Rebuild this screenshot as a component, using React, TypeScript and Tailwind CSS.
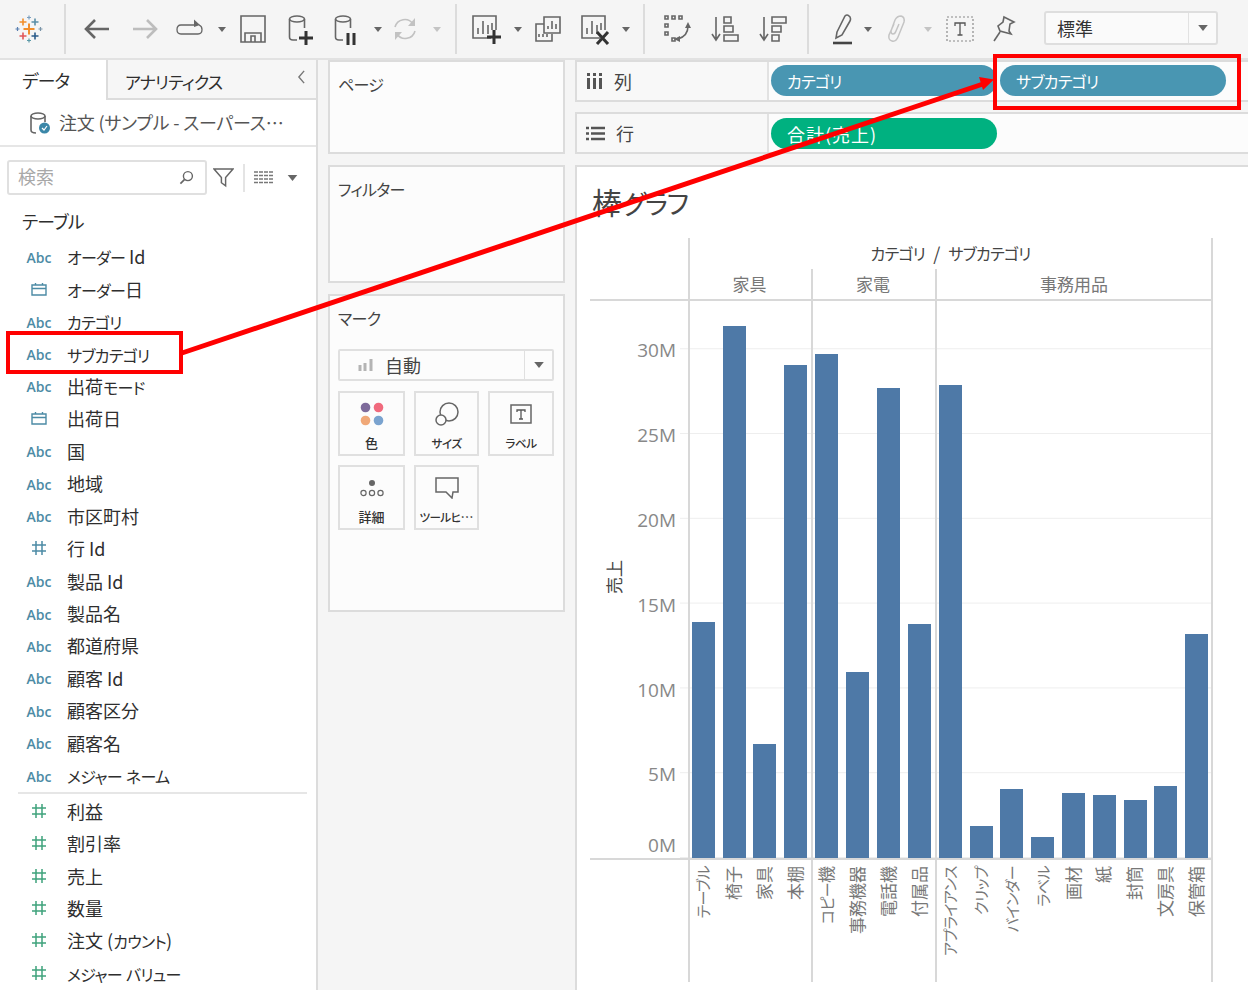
import React from "react"

const ic = "fill-none stroke-[#666666] stroke-[1.6]"

// the reference font has narrow kana, so katakana runs get set a little tighter
function Jp({ text }: { text: string }) {
  const parts = text.split(/([\u30A0-\u30FF]+)/)
  return (
    <>
      {parts.map((p, i) =>
        i % 2 === 1 ? (
          <span key={i} className="text-[0.89em] tracking-[-0.045em]">
            {p}
          </span>
        ) : (
          p
        )
      )}
    </>
  )
}

function Caret({ className = "", light = false }: { className?: string; light?: boolean }) {
  return (
    <svg viewBox="0 0 8 5" className={`w-[8px] h-[5px] shrink-0 ${className}`}>
      <path d="M0 0H8L4 5Z" fill={light ? "#c4c4c4" : "#666666"} />
    </svg>
  )
}

function Sep({ className = "" }: { className?: string }) {
  return <div className={`w-[2px] h-[50px] bg-[#dcdcdc] shrink-0 ${className}`} />
}

function Plus({ x, y, s, c, w }: { x: number; y: number; s: number; c: string; w: number }) {
  return <path d={`M${x - s} ${y}H${x + s}M${x} ${y - s}V${y + s}`} stroke={c} strokeWidth={w} />
}

function Logo() {
  return (
    <svg viewBox="0 0 28 28" className="w-[28px] h-[28px] shrink-0">
      <Plus x={14} y={14} s={5.5} c="#f28e2b" w={2} />
      <Plus x={8} y={7} s={3.5} c="#f28e2b" w={1.6} />
      <Plus x={20} y={7} s={3.5} c="#5b8fa8" w={1.6} />
      <Plus x={8} y={21} s={3.5} c="#e15759" w={1.6} />
      <Plus x={20} y={21} s={3.5} c="#2b5c8a" w={1.6} />
      <Plus x={14} y={2.5} s={2} c="#7b9fc0" w={1.2} />
      <Plus x={14} y={25.5} s={2} c="#5b9aa8" w={1.2} />
      <Plus x={2.5} y={14} s={2} c="#5a7fb0" w={1.2} />
      <Plus x={25.5} y={14} s={2} c="#7a94a8" w={1.2} />
    </svg>
  )
}

function Cyl({ mark }: { mark?: React.ReactNode }) {
  return (
    <svg viewBox="0 0 26 34" className="w-[26px] h-[34px] shrink-0">
      <ellipse cx="10" cy="7" rx="7.5" ry="3" className={ic} />
      <path d="M2.5 7V25Q2.5 28 6 28H10M17.5 7V16" className={ic} />
      {mark}
    </svg>
  )
}

function Chart({ w = 30, children }: { w?: number; children?: React.ReactNode }) {
  return (
    <svg viewBox="0 0 30 32" width={w} height={32} className="shrink-0">
      <path d="M20 25H2V3H25V17" className={ic} />
      <path d="M7 21V15M12 21V8M17 21V12M21 17V10" className={ic} strokeWidth={2} />
      {children}
    </svg>
  )
}

function Toolbar() {
  return (
    <div className="h-[60px] flex items-center pl-[15px] border-b-2 border-[#e2e2e2] shrink-0">
      <Logo />
      <Sep className="ml-[21px]" />
      <svg viewBox="0 0 28 24" className="w-[28px] h-[24px] ml-[17px] shrink-0">
        <path d="M26 12H3M12 3L3 12L12 21" fill="none" stroke="#666666" strokeWidth="2.6" />
      </svg>
      <svg viewBox="0 0 28 24" className="w-[28px] h-[24px] ml-[20px] shrink-0">
        <path d="M2 12H25M16 3L25 12L16 21" fill="none" stroke="#bdbdbd" strokeWidth="2.6" />
      </svg>
      <svg viewBox="0 0 32 22" className="w-[32px] h-[22px] ml-[15px] shrink-0">
        <path d="M20 7H7Q3 7 3 11.5Q3 16 7 16H24Q28 16 28 11.5Q28 8 25 7" fill="none" stroke="#666666" strokeWidth="1.3" />
        <path d="M20 1.5L26 7L20 9Z" fill="#666666" />
      </svg>
      <Caret className="ml-[12px]" />
      <svg viewBox="0 0 26 28" className="w-[26px] h-[28px] ml-[14px] shrink-0">
        <path d="M1 1H25V27H1Z" className={ic} />
        <path d="M5 27V18H21V27M11 27V21H15V27" className={ic} />
      </svg>
      <div className="ml-[21px] flex">
        <Cyl mark={<path d="M19 19V33M12 26H26" stroke="#333333" strokeWidth="3" />} />
      </div>
      <div className="ml-[20px] flex">
        <Cyl mark={<path d="M15 21V33M21 21V33" stroke="#333333" strokeWidth="3" />} />
      </div>
      <Caret className="ml-[15px]" />
      <svg viewBox="0 0 26 26" className="w-[26px] h-[26px] ml-[10px] shrink-0">
        <path d="M3 11A10 10 0 0 1 21 8M23 15A10 10 0 0 1 5 18" fill="none" stroke="#c2c2c2" strokeWidth="1.6" />
        <path d="M23 2V10H16ZM3 24V16H10Z" fill="#c2c2c2" />
      </svg>
      <Caret light className="ml-[15px]" />
      <Sep className="ml-[14px]" />
      <div className="ml-[14px] flex">
        <Chart>
          <path d="M23 17V31M16 24H30" stroke="#333333" strokeWidth="3" />
        </Chart>
      </div>
      <Caret className="ml-[13px]" />
      <svg viewBox="0 0 28 28" className="w-[28px] h-[28px] ml-[12px] shrink-0">
        <path d="M10 9H2V26H18V19" className={ic} />
        <path d="M10 2H26V18H10Z" className={ic} />
        <path d="M14 14V11M18 14V6M22 14V9M5 22V19M9 22V19M13 22V19" className={ic} />
      </svg>
      <div className="ml-[18px] flex">
        <Chart>
          <path d="M17 19L28 31M28 19L17 31" stroke="#333333" strokeWidth="3" />
        </Chart>
      </div>
      <Caret className="ml-[12px]" />
      <Sep className="ml-[13px]" />
      <svg viewBox="0 0 28 30" className="w-[28px] h-[30px] ml-[18px] shrink-0">
        <path d="M2 2H5V5H2ZM9 2H12V5H9ZM16 2H19V5H16ZM2 10H5V13H2ZM2 18H5V21H2ZM9 24H12V27H9Z" className={ic} strokeWidth={1.2} />
        <path d="M25 12Q25 22 15 25" className={ic} />
        <path d="M25 8L28 14H22ZM11 25L17 22V28Z" fill="#666666" />
      </svg>
      <svg viewBox="0 0 28 28" className="w-[28px] h-[28px] ml-[20px] shrink-0">
        <path d="M5 2V24M1 19L5 25L9 19" className={ic} />
        <path d="M13 2H20V8H13ZM13 11H22V17H13ZM13 20H27V26H13Z" className={ic} />
      </svg>
      <svg viewBox="0 0 28 28" className="w-[28px] h-[28px] ml-[20px] shrink-0">
        <path d="M5 2V24M1 19L5 25L9 19" className={ic} />
        <path d="M13 2H27V8H13ZM13 11H22V17H13ZM13 20H20V26H13Z" className={ic} />
      </svg>
      <Sep className="ml-[20px]" />
      <svg viewBox="0 0 24 32" className="w-[24px] h-[32px] ml-[20px] shrink-0">
        <path d="M8 19L16 3Q18 1 20 3L21 4Q22 6 21 8L13 22L7 25Z" className={ic} />
        <path d="M4 30H23" stroke="#444444" strokeWidth="2.6" />
      </svg>
      <Caret className="ml-[11px]" />
      <svg viewBox="0 0 22 28" className="w-[22px] h-[28px] ml-[13px] shrink-0">
        <path d="M9 9L4 20Q3 25 7 26Q11 27 13 22L19 7Q20 2 16 1Q12 1 10 5L6 16Q6 19 8 19Q10 19 11 16L14 9" fill="none" stroke="#c4c4c4" strokeWidth="1.5" />
      </svg>
      <Caret light className="ml-[17px]" />
      <svg viewBox="0 0 28 26" className="w-[28px] h-[26px] ml-[14px] shrink-0">
        <path d="M1 1H27V25H1Z" fill="none" stroke="#8a8a8a" strokeWidth="1.2" strokeDasharray="2 2" />
        <path d="M9 10V7H19V10M14 7V19M11.5 19H16.5" fill="none" stroke="#555555" strokeWidth="1.3" />
      </svg>
      <svg viewBox="0 0 24 28" className="w-[24px] h-[28px] ml-[18px] shrink-0">
        <path d="M12 2L22 7L18 9L17 16L19 19L8 16L6 11L11 7Z" className={ic} />
        <path d="M8 17L2 26" className={ic} />
      </svg>
      <div className="ml-[28px] mb-[2px] w-[174px] h-[34px] bg-[#fafafa] border-2 border-[#dedede] rounded-[3px] flex items-center shrink-0">
        <span className="flex-1 pl-[11px] text-[18px] text-[#333333]">標準</span>
        <div className="w-[28px] h-full border-l border-[#e2e2e2] flex items-center justify-center">
          <Caret className="w-[10px] h-[6px]" />
        </div>
      </div>
    </div>
  )
}

function FieldIcon({ type }: { type: string }) {
  if (type === "abc") {
    return <span className="font-['Open_Sans',sans-serif] text-[14px] font-semibold text-[#4c8ba5] w-[26px] text-center mt-[3px] [font-feature-settings:normal]">Abc</span>
  }
  if (type === "date") {
    return (
      <svg viewBox="0 0 16 14" className="w-[16px] h-[14px] mx-[5px]">
        <path d="M1 3H15V13H1ZM1 6.5H15M4.5 1V3M11.5 1V3" fill="none" stroke="#4c8ba5" strokeWidth="1.4" />
      </svg>
    )
  }
  const c = type === "dim#" ? "#4c8ba5" : "#3fa37c"
  return (
    <svg viewBox="0 0 16 16" className="w-[16px] h-[16px] mx-[5px]">
      <path d="M5 1V15M11 1V15M1 5H15M1 11H15" fill="none" stroke={c} strokeWidth="1.5" />
    </svg>
  )
}

function FieldRow({ name, type }: { name: string; type: string }) {
  return (
    <div className="h-[32.44px] flex items-center pl-[26px] gap-[15px] text-[18px] text-[#2e2e2e] leading-none whitespace-nowrap">
      <FieldIcon type={type} />
      <span>
        <Jp text={name} />
      </span>
    </div>
  )
}

function Sidebar() {
  return (
    <div className="w-[318px] shrink-0 bg-white border-r-2 border-[#dcdcdc] flex flex-col">
      <div className="h-[40px] flex shrink-0">
        <div className="w-[106px] pl-[22px] pt-[6px] text-[20px] leading-[28px] text-[#2e2e2e] tracking-[-0.5px]">
          <Jp text="データ" />
        </div>
        <div className="flex-1 bg-[#f6f6f6] border-l-2 border-b-2 border-[#dcdcdc] flex items-center pl-[17px] text-[19px] text-[#2e2e2e] leading-none">
          <span className="flex-1 pt-[3px]">
            <Jp text="アナリティクス" />
          </span>
          <svg viewBox="0 0 10 16" className="w-[9px] h-[14px] mr-[10px] mb-[4px]">
            <path d="M8 1L2 8L8 15" fill="none" stroke="#777777" strokeWidth="1.6" />
          </svg>
        </div>
      </div>
      <div className="h-[47px] border-b-2 border-[#e6e6e6] flex items-center pl-[29px] gap-[8px] text-[18px] text-[#555555] shrink-0 whitespace-nowrap">
        <svg viewBox="0 0 22 24" className="w-[22px] h-[24px] shrink-0">
          <ellipse cx="9" cy="5" rx="7" ry="3" className={ic} strokeWidth={1.3} />
          <path d="M2 5V19Q2 22 7 22M16 5V11" className={ic} strokeWidth={1.3} />
          <circle cx="15.5" cy="17" r="5.5" fill="#3b87a8" />
          <path d="M13 17L15 19L18 15" fill="none" stroke="#ffffff" strokeWidth="1.2" />
        </svg>
        <span className="tracking-[-0.2px]">注文 (サンプル - スーパース…</span>
      </div>
      <div className="flex items-center pl-[7px] mt-[13px] shrink-0">
        <div className="w-[200px] h-[35px] border-2 border-[#e0e0e0] rounded-[3px] flex items-center pl-[9px] pr-[11px] text-[18px] text-[#a8a8a8]">
          <span className="flex-1 pb-[3px]">検索</span>
          <svg viewBox="0 0 16 16" className="w-[15px] h-[15px]">
            <circle cx="9.5" cy="6.5" r="4.8" fill="none" stroke="#666666" strokeWidth="1.5" />
            <path d="M6 10L1.5 14.5" stroke="#666666" strokeWidth="1.8" />
          </svg>
        </div>
        <svg viewBox="0 0 20 20" className="w-[21px] h-[21px] ml-[6px]">
          <path d="M1 2H19L12 10V18L8 15V10Z" fill="none" stroke="#666666" strokeWidth="1.4" />
        </svg>
        <div className="w-[2px] h-[28px] bg-[#e4e4e4] ml-[9px]" />
        <svg viewBox="0 0 20 16" className="w-[20px] h-[16px] ml-[9px]">
          <path d="M0 2H20M0 5.5H20M0 9H20M0 12.5H20" stroke="#777777" strokeWidth="1.6" strokeDasharray="4 1" />
        </svg>
        <Caret className="w-[11px] h-[6px] ml-[13px]" />
      </div>
      <div className="pl-[22px] mt-[11px] h-[30px] text-[20px] leading-[30px] text-[#2e2e2e] shrink-0">
        <Jp text="テーブル" />
      </div>
      <div className="mt-[4px] shrink-0">
        {dimensions.map((f) => (
          <FieldRow key={f.name} name={f.name} type={f.type} />
        ))}
      </div>
      <div className="h-[2px] bg-[#e6e6e6] ml-[18px] mr-[9px] mt-[1px] shrink-0" />
      <div className="shrink-0">
        {measures.map((name) => (
          <FieldRow key={name} name={name} type="measure" />
        ))}
      </div>
    </div>
  )
}

function MarkButton({ label, className = "", children }: { label: string; className?: string; children: React.ReactNode }) {
  return (
    <div className={`h-[65px] border-2 border-[#e0e0e0] flex flex-col items-center pt-[8px] ${className}`}>
      <div className="h-[26px] flex items-center justify-center">{children}</div>
      <span className="text-[13px] leading-[18px] mt-[7px] font-medium text-[#333333] whitespace-nowrap">
        <Jp text={label} />
      </span>
    </div>
  )
}

function Panel({ title, className = "", children }: { title: string; className?: string; children?: React.ReactNode }) {
  return (
    <div className={`bg-[#fcfcfc] border-2 border-[#dcdcdc] px-[8px] pt-[8px] shrink-0 ${className}`}>
      <div className="text-[18px] leading-[26px] text-[#444444]">
        <Jp text={title} />
      </div>
      {children}
    </div>
  )
}

function MiddleColumn() {
  return (
    <div className="w-[237px] ml-[10px] shrink-0 flex flex-col">
      <Panel title="ページ" className="h-[94px]" />
      <Panel title="フィルター" className="h-[118px] mt-[11px]" />
      <Panel title="マーク" className="h-[318px] mt-[11px]">
        <div className="mt-[18px] h-[32px] w-[216px] border-2 border-[#e0e0e0] rounded-[2px] flex items-center">
          <svg viewBox="0 0 16 14" className="w-[16px] h-[14px] ml-[18px]">
            <path d="M2 7V13M7 5V13M13 1V13" stroke="#b4b4b4" strokeWidth="3" />
          </svg>
          <span className="flex-1 ml-[11px] text-[18px] text-[#444444] leading-none">自動</span>
          <div className="w-[28px] h-full border-l border-[#e0e0e0] flex items-center justify-center">
            <Caret className="w-[10px] h-[6px]" />
          </div>
        </div>
        <div className="grid grid-cols-[67px_65px_66px] gap-x-[9px] gap-y-[9px] mt-[10px] w-[216px]">
          <MarkButton label="色">
            <svg viewBox="0 0 24 24" className="w-[24px] h-[24px]">
              <circle cx="5.5" cy="5.5" r="4.8" fill="#7e6b9b" />
              <circle cx="18.5" cy="5.5" r="4.8" fill="#f06a7d" />
              <circle cx="5.5" cy="18.5" r="4.8" fill="#f0a878" />
              <circle cx="18.5" cy="18.5" r="4.8" fill="#7aa3cf" />
            </svg>
          </MarkButton>
          <MarkButton label="サイズ">
            <svg viewBox="0 0 24 24" className="w-[24px] h-[24px]">
              <circle cx="14" cy="10" r="9" fill="none" stroke="#666666" strokeWidth="1.5" />
              <circle cx="6" cy="18" r="5" fill="#fcfcfc" stroke="#666666" strokeWidth="1.5" />
            </svg>
          </MarkButton>
          <MarkButton label="ラベル">
            <svg viewBox="0 0 22 20" className="w-[22px] h-[20px]">
              <path d="M1 1H21V19H1Z" fill="none" stroke="#666666" strokeWidth="1.5" />
              <path d="M7 8V6H15V8M11 6V15M9 15H13" fill="none" stroke="#555555" strokeWidth="1.3" />
            </svg>
          </MarkButton>
          <MarkButton label="詳細">
            <svg viewBox="0 0 24 18" className="w-[24px] h-[18px]">
              <circle cx="12" cy="4" r="3" fill="#666666" />
              <circle cx="3.5" cy="14" r="2.6" fill="none" stroke="#666666" strokeWidth="1.2" />
              <circle cx="12" cy="14" r="2.6" fill="none" stroke="#666666" strokeWidth="1.2" />
              <circle cx="20.5" cy="14" r="2.6" fill="none" stroke="#666666" strokeWidth="1.2" />
            </svg>
          </MarkButton>
          <MarkButton label="ツールヒ…">
            <svg viewBox="0 0 24 22" className="w-[24px] h-[22px]">
              <path d="M1 1H23V15H18L17 21L11 15H1Z" fill="none" stroke="#666666" strokeWidth="1.5" />
            </svg>
          </MarkButton>
        </div>
      </Panel>
    </div>
  )
}

function Pill({ label, color, className = "" }: { label: string; color: string; className?: string }) {
  return (
    <div className={`w-[226px] h-[31px] rounded-full pl-[16px] flex items-center text-[18px] leading-none text-white ${color} ${className}`}>
      <span>
        <Jp text={label} />
      </span>
    </div>
  )
}

function Shelf({ label, icon, className = "", children }: { label: string; icon: React.ReactNode; className?: string; children: React.ReactNode }) {
  return (
    <div className="h-[42px] bg-[#fcfcfc] border-y-2 border-l-2 border-[#dcdcdc] flex shrink-0">
      <div className="w-[192px] border-r-2 border-[#e2e2e2] bg-[#f8f8f8] flex items-center pl-[9px] gap-[11px] text-[18px] text-[#444444]">
        {icon}
        <span>{label}</span>
      </div>
      <div className={`flex items-center pl-[2px] gap-[3px] ${className}`}>{children}</div>
    </div>
  )
}

const ticks = ["5M", "10M", "15M", "20M", "25M", "30M"]
const gridBg = "bg-[linear-gradient(to_top,#eeeeee_1px,transparent_1px)] bg-[size:100%_84.8px] bg-bottom"
const vtext = "[writing-mode:vertical-rl] [text-orientation:sideways] rotate-180"

function ViewChart() {
  return (
    <div className="flex-1 mt-[11px] bg-white border-t-2 border-l-2 border-[#dcdcdc] pl-[13px]">
      <div className="h-[71px] pt-[14px] pl-[2px] text-[30px] leading-[40px] text-[#444444]">
        <Jp text="棒グラフ" />
      </div>
      <div className="grid grid-cols-[98px_123px_124px_278px] grid-rows-[31px_32px_559px_122px]">
        <div />
        <div className="col-span-3 border-x-2 border-[#d8d8d8] flex items-center justify-center text-[18px] text-[#444444] whitespace-pre">
          <Jp text="カテゴリ  /  サブカテゴリ" />
        </div>

        <div className="border-b-2 border-[#d8d8d8]" />
        {groups.map((g) => (
          <div
            key={g.name}
            className={`border-b-2 border-[#d8d8d8] flex items-center justify-center text-[17px] text-[#777777] ${g.last ? "shadow-[inset_2px_0_0_#d8d8d8,inset_-2px_0_0_#d8d8d8]" : "shadow-[inset_2px_0_0_#d8d8d8]"}`}
          >
            {g.name}
          </div>
        ))}

        <div className="border-b-2 border-[#d8d8d8] flex">
          <div className="w-[38px] pl-[14px] pb-[5px] flex items-center">
            <span className={`${vtext} text-[17px] leading-[20px] text-[#444444]`}>売上</span>
          </div>
          <div className="flex-1 pr-[4px] flex flex-col-reverse items-end text-[19px] text-[#888888] font-['Open_Sans',sans-serif]">
            <div className="h-[26px] leading-[26px]">0M</div>
            {ticks.map((t, i) => (
              <div key={t} className={`h-[84.8px] flex items-center ${i === 0 ? "mb-[15px]" : ""}`}>
                {t}
              </div>
            ))}
          </div>
          <div className={`w-[8px] ${gridBg}`} />
        </div>
        {groups.map((g) => (
          <div
            key={g.name}
            className={`border-b-2 border-[#d8d8d8] flex ${gridBg} ${g.last ? "shadow-[inset_2px_0_0_#d8d8d8,inset_-2px_0_0_#d8d8d8] pr-[1px]" : "shadow-[inset_2px_0_0_#d8d8d8]"}`}
          >
            {g.items.map((it) => (
              <div key={it.name} className="flex-1 flex items-end justify-center">
                <div className="w-[23px] bg-[#4e79a7]" style={{ height: it.h }} />
              </div>
            ))}
          </div>
        ))}

        <div />
        {groups.map((g) => (
          <div
            key={g.name}
            className={`flex ${g.last ? "shadow-[inset_2px_0_0_#d8d8d8,inset_-2px_0_0_#d8d8d8] pr-[1px]" : "shadow-[inset_2px_0_0_#d8d8d8]"}`}
          >
            {g.items.map((it) => (
              <div key={it.name} className="flex-1 flex justify-center items-start pt-[6px] pr-[2px]">
                <span className={`${vtext} text-[17px] leading-[20px] text-[#777777] whitespace-nowrap`}>
                  <Jp text={it.name} />
                </span>
              </div>
            ))}
          </div>
        ))}
      </div>
    </div>
  )
}

function RightColumn() {
  return (
    <div className="flex-1 ml-[10px] flex flex-col min-w-0">
      <Shelf
        label="列"
        className="pb-[1px]"
        icon={
          <svg viewBox="0 0 17 16" className="w-[17px] h-[16px]">
            <path d="M2.5 0V3M8.5 0V3M14.5 0V3M2.5 5V16M8.5 5V16M14.5 5V16" stroke="#555555" strokeWidth="3" />
          </svg>
        }
      >
        <Pill label="カテゴリ" color="bg-[#4996b2]" />
        <Pill label="サブカテゴリ" color="bg-[#4996b2]" />
      </Shelf>
      <div className="mt-[10px]">
        <Shelf
          label="行"
          className="pt-[1px]"
          icon={
            <svg viewBox="0 0 19 15" className="w-[19px] h-[15px]">
              <path d="M0 2H3M5 2H19M0 7.5H3M5 7.5H19M0 13H3M5 13H19" stroke="#555555" strokeWidth="2.4" />
            </svg>
          }
        >
          <Pill label="合計(売上)" color="bg-[#00b180]" className="tracking-[1px]" />
        </Shelf>
      </div>
      <ViewChart />
    </div>
  )
}

export default function App() {
  return (
    <div className="relative w-[1248px] h-[990px] overflow-hidden bg-[#f5f5f5] flex flex-col font-['Noto_Sans_CJK_JP','Noto_Sans',sans-serif] [font-feature-settings:'palt']">
      <Toolbar />
      <div className="flex flex-1 min-h-0">
        <Sidebar />
        <MiddleColumn />
        <RightColumn />
      </div>

      {/* callouts drawn over the screenshot */}
      <div className="absolute left-[6px] top-[331px] w-[177px] h-[43px] border-[4px] border-[#ff0000]" />
      <div className="absolute left-[993px] top-[54px] w-[248px] h-[56px] border-[4px] border-[#ff0000]" />
      <svg viewBox="0 0 1248 990" className="absolute inset-0 w-[1248px] h-[990px] pointer-events-none">
        <path d="M182 353L983 84" stroke="#ff0000" strokeWidth="5" />
        <path d="M994 79.5L979 77L983 90Z" fill="#ff0000" />
      </svg>
    </div>
  )
}

const dimensions = [
  { name: "オーダー Id", type: "abc" },
  { name: "オーダー日", type: "date" },
  { name: "カテゴリ", type: "abc" },
  { name: "サブカテゴリ", type: "abc" },
  { name: "出荷モード", type: "abc" },
  { name: "出荷日", type: "date" },
  { name: "国", type: "abc" },
  { name: "地域", type: "abc" },
  { name: "市区町村", type: "abc" },
  { name: "行 Id", type: "dim#" },
  { name: "製品 Id", type: "abc" },
  { name: "製品名", type: "abc" },
  { name: "都道府県", type: "abc" },
  { name: "顧客 Id", type: "abc" },
  { name: "顧客区分", type: "abc" },
  { name: "顧客名", type: "abc" },
  { name: "メジャー ネーム", type: "abc" },
]

const measures = ["利益", "割引率", "売上", "数量", "注文 (カウント)", "メジャー バリュー"]

const groups = [
  {
    name: "家具",
    items: [
      { name: "テーブル", h: 236 },
      { name: "椅子", h: 532 },
      { name: "家具", h: 114 },
      { name: "本棚", h: 493 },
    ],
  },
  {
    name: "家電",
    items: [
      { name: "コピー機", h: 504 },
      { name: "事務機器", h: 186 },
      { name: "電話機", h: 470 },
      { name: "付属品", h: 234 },
    ],
  },
  {
    name: "事務用品",
    last: true,
    items: [
      { name: "アプライアンス", h: 473 },
      { name: "クリップ", h: 32 },
      { name: "バインダー", h: 69 },
      { name: "ラベル", h: 21 },
      { name: "画材", h: 65 },
      { name: "紙", h: 63 },
      { name: "封筒", h: 58 },
      { name: "文房具", h: 72 },
      { name: "保管箱", h: 224 },
    ],
  },
]
